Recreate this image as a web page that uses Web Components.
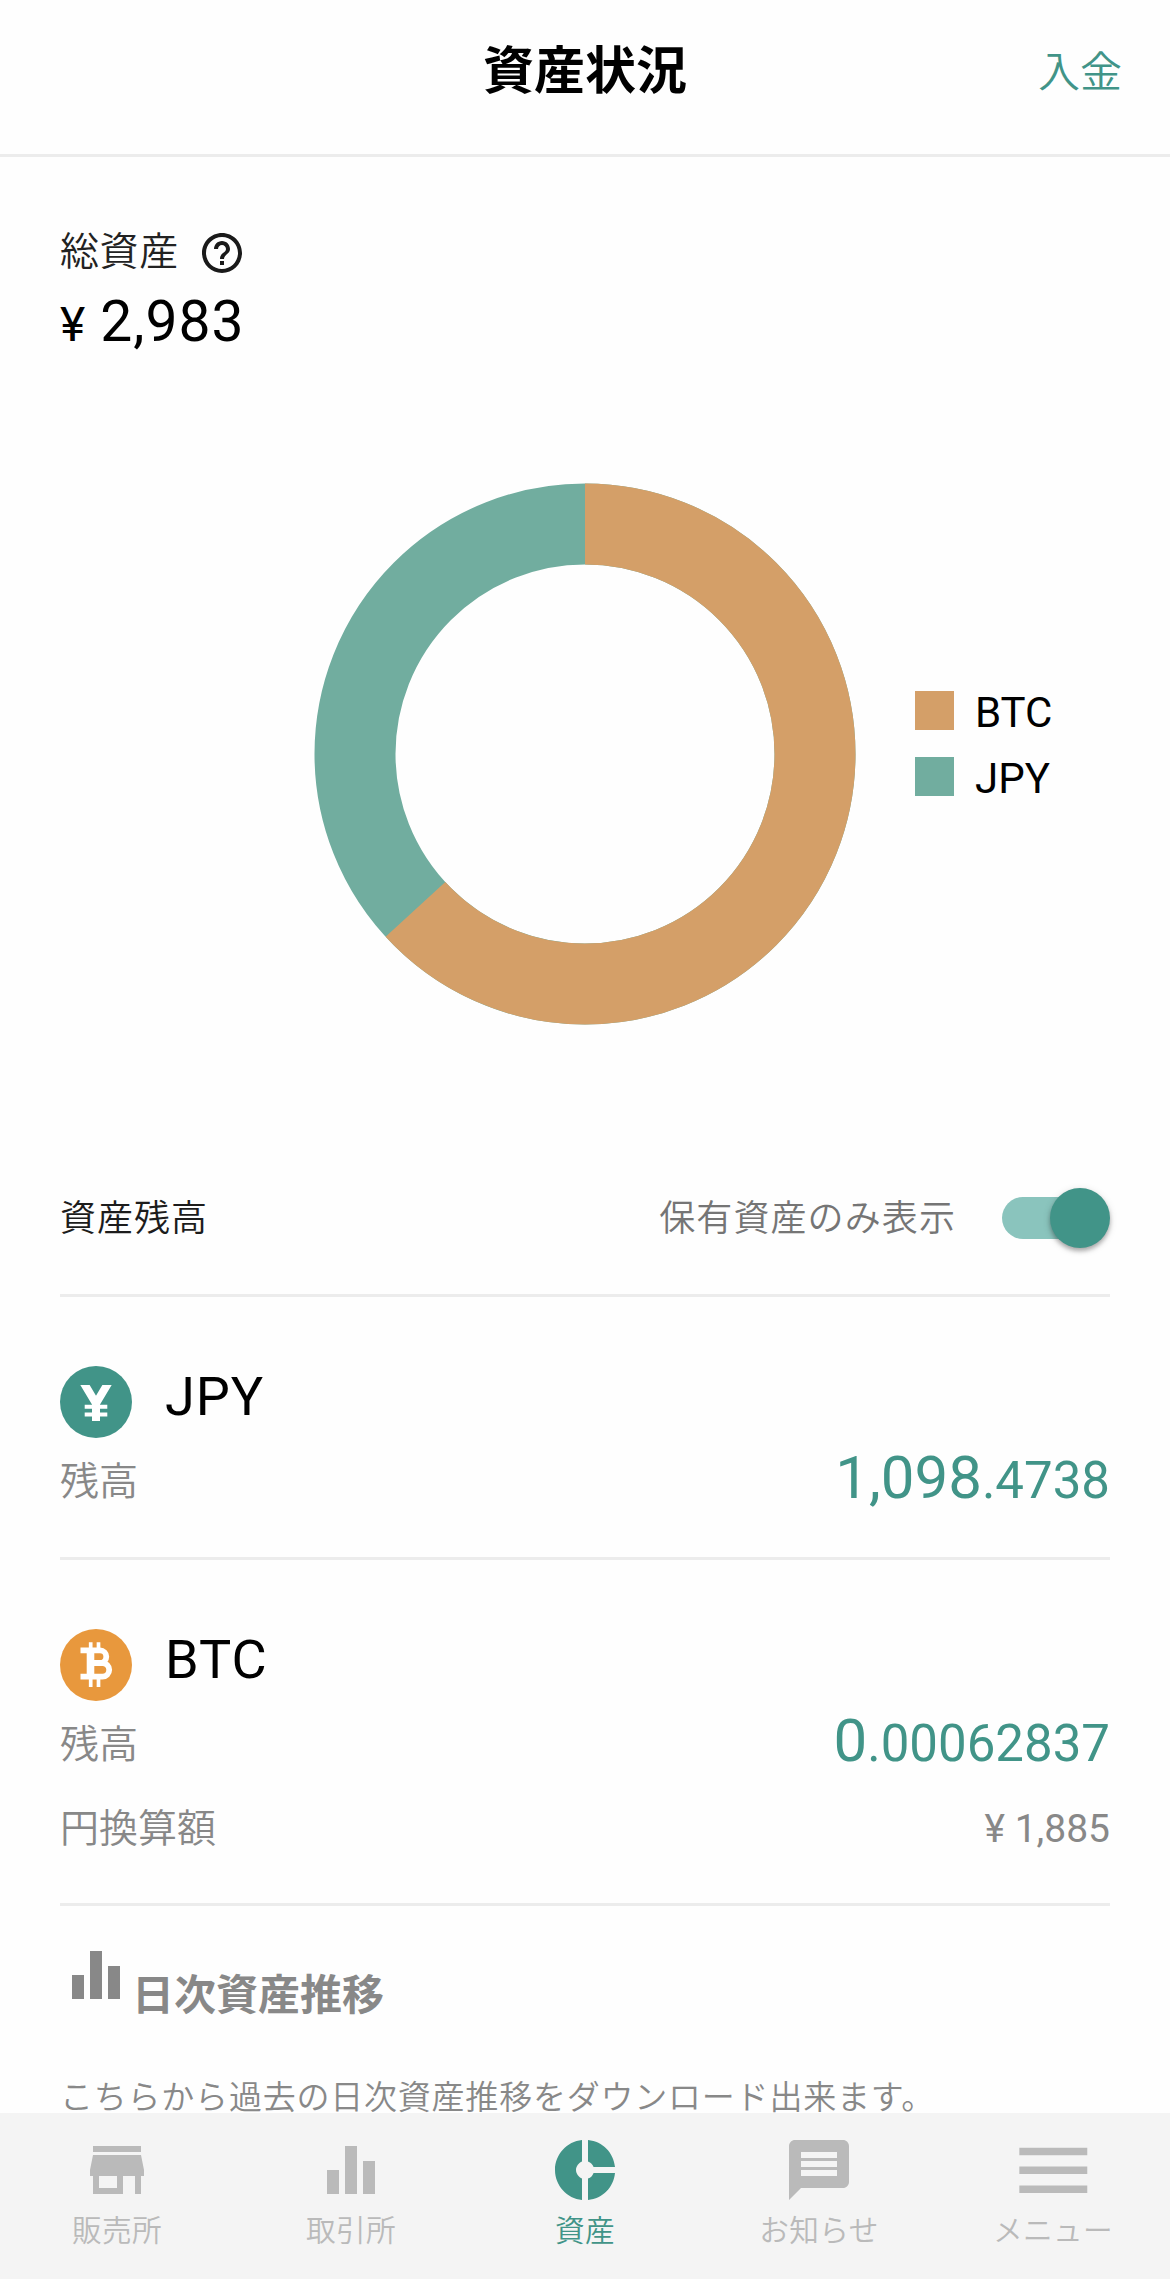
<!DOCTYPE html>
<html lang="ja">
<head>
<meta charset="utf-8">
<title>資産状況</title>
<style>
  :root {
    --green: #419488;
    --line: #ececec;
    --muted: #888888;
    --jp: "Noto Sans CJK JP", sans-serif;
    --num: Roboto, "Noto Sans CJK JP", sans-serif;
  }
  body {
    margin: 0;
    background: #fefefe;
    font-family: var(--jp);
    font-weight: 350;
    color: #000;
  }
</style>
</head>
<body>
<asset-page></asset-page>

<script>
// Small helper: attach an open shadow root and fill it from a template
function render(el, html) {
  const template = document.createElement('template');
  template.innerHTML = html;
  const shadow = el.attachShadow({ mode: 'open' });
  shadow.appendChild(template.content.cloneNode(true));
  return shadow;
}

const ICONS = {
  help: '<path d="M11 18h2v-2h-2v2zm1-16C6.48 2 2 6.48 2 12s4.48 10 10 10 10-4.48 10-10S17.52 2 12 2zm0 18c-4.41 0-8-3.59-8-8s3.59-8 8-8 8 3.59 8 8-3.59 8-8 8zm0-14c-2.21 0-4 1.79-4 4h2c0-1.1.9-2 2-2s2 .9 2 2c0 2-3 1.75-3 5h2c0-2.25 3-2.5 3-5 0-2.21-1.79-4-4-4z"/>',
  store: '<path d="M20 4H4v2h16V4zm1 10v-2l-1-5H4l-1 5v2h1v6h10v-6h4v6h2v-6h1zm-9 4H6v-4h6v4z"/>',
  bars: '<path d="M10 20h4V4h-4v16zm-6 0h4v-8H4v8zM16 9v11h4V9h-4z"/>',
  donut: '<path d="M11 9.16V2c-5 .5-9 4.79-9 10s4 9.5 9 10v-7.16c-1-.41-2-1.52-2-2.84s1-2.43 2-2.84zM14.86 11H22c-.48-4.75-4-8.53-9-9v7.16c1 .3 1.52.98 1.86 1.84zM13 14.84V22c5-.47 8.52-4.25 9-9h-7.14c-.34.86-.86 1.54-1.86 1.84z"/>',
  message: '<path d="M20 2H4c-1.1 0-1.99.9-1.99 2L2 22l4-4h14c1.1 0 2-.9 2-2V4c0-1.1-.9-2-2-2zm-2 12H6v-2h12v2zm0-3H6V9h12v2zm0-3H6V6h12v2z"/>',
  menu: '<path d="M3 18h18v-2H3v2zm0-5h18v-2H3v2zm0-7v2h18V6H3z"/>'
};

class MdIcon extends HTMLElement {
  constructor() {
    super();
    render(this, `
      <style>
        :host { display: block; flex: none; width: var(--size, 72px); height: var(--size, 72px); }
        svg { display: block; width: 100%; height: 100%; fill: currentColor; }
      </style>
      <svg viewBox="0 0 24 24">${ICONS[this.getAttribute('name')] || ''}</svg>
    `);
  }
}
customElements.define('md-icon', MdIcon);

// Round currency badge
const COINS = {
  jpy: `<circle cx="36" cy="36" r="36" fill="#419488"/>
    <clipPath id="top"><rect y="19" width="72" height="40"/></clipPath>
    <g fill="none" stroke="#fff" clip-path="url(#top)">
      <path d="M21.4 13L36 37.5L50.6 13" stroke-width="8"/>
      <path d="M36 36V55" stroke-width="8"/>
      <path d="M24.7 40.8H47.3M24.7 48.4H47.3" stroke-width="4"/>
    </g>`,
  btc: `<circle cx="36" cy="36" r="36" fill="#e8983d"/>
    <g fill="none" stroke="#fff">
      <path d="M20.5 21.4H40a6.3 6.3 0 0 1 0 12.6H31M40 34h2.4a6.8 6.8 0 0 1 0 13.6H20.5" stroke-width="5.8"/>
      <path d="M30.5 20V50" stroke-width="7.6"/>
      <path d="M30.7 13.3V20M38.5 13.3V20M30.7 49V58M38.5 49V58" stroke-width="3.7"/>
    </g>`
};

class CoinBadge extends HTMLElement {
  constructor() {
    super();
    render(this, `
      <style>
        :host { display: block; flex: none; width: 72px; height: 72px; }
        svg { display: block; }
      </style>
      <svg width="72" height="72" viewBox="0 0 72 72">${COINS[this.getAttribute('coin')]}</svg>
    `);
  }
}
customElements.define('coin-badge', CoinBadge);

class AppHeader extends HTMLElement {
  constructor() {
    super();
    render(this, `
      <style>
        :host {
          display: grid;
          grid-template-columns: 1fr auto 1fr;
          align-items: center;
          flex: none;
          box-sizing: border-box;
          height: 157px;
          padding: 0 48px 20px;
          border-bottom: 3px solid var(--line);
        }
        h1 { grid-column: 2; margin: 0; font-size: 51px; line-height: 60px; font-weight: 700; }
        .action { justify-self: end; margin-top: 4px; font-size: 42px; line-height: 60px; color: var(--green); }
      </style>
      <h1><slot></slot></h1>
      <span class="action"><slot name="action"></slot></span>
    `);
  }
}
customElements.define('app-header', AppHeader);

class AssetTotal extends HTMLElement {
  constructor() {
    super();
    render(this, `
      <style>
        :host { display: block; height: 255px; padding-top: 72px; }
        .label { display: flex; align-items: center; gap: 19px; height: 48px; font-size: 39px; line-height: 48px; color: #222; }
        .label span { margin-top: -10px; letter-spacing: 0.6px; }
        md-icon { --size: 48px; color: #1a1a1a; }
        .amount { display: flex; align-items: baseline; gap: 14px; margin-top: 15px; font: 400 57px/60px var(--num); letter-spacing: 1px; }
        .unit { font-size: 48px; }
      </style>
      <div class="label"><span>総資産</span><md-icon name="help"></md-icon></div>
      <div class="amount"><span class="unit">¥</span><span><slot></slot></span></div>
    `);
  }
}
customElements.define('asset-total', AssetTotal);

class AssetChart extends HTMLElement {
  constructor() {
    super();
    const btc = Number(this.getAttribute('btc'));
    render(this, `
      <style>
        :host { display: grid; grid-template-columns: 1fr 542px 1fr; height: 542px; margin-top: -1px; }
        svg { grid-column: 2; display: block; }
        .legend { display: flex; flex-direction: column; gap: 27px; padding: 208px 0 0 59px; font: 400 42px/39px var(--num); }
        .item { display: flex; gap: 21px; height: 39px; }
        .item span { padding-top: 2px; }
        i { width: 39px; height: 39px; background: #d49f68; }
        .jpy i { background: #71ad9f; }
      </style>
      <svg width="542" height="542" viewBox="-271 -271 542 542" fill="none" stroke-width="81">
        <circle r="230" stroke="#71ad9f"/>
        <circle r="230" stroke="#d49f68" transform="rotate(-90)" pathLength="100" stroke-dasharray="${btc} 100"/>
      </svg>
      <div class="legend">
        <div class="item"><i></i><span>BTC</span></div>
        <div class="item jpy"><i></i><span>JPY</span></div>
      </div>
    `);
  }
}
customElements.define('asset-chart', AssetChart);

class ToggleSwitch extends HTMLElement {
  constructor() {
    super();
    render(this, `
      <style>
        :host { display: flex; align-items: center; width: 102px; height: 42px; border-radius: 21px; background: #8ac4bd; margin-right: 6px; }
        .thumb {
          flex: none;
          width: 60px;
          height: 60px;
          margin-left: 48px;
          border-radius: 50%;
          background: var(--green);
          box-shadow: 0 3px 4px rgba(0, 0, 0, .28), 0 2px 8px rgba(0, 0, 0, .12);
        }
      </style>
      <div class="thumb"></div>
    `);
  }
}
customElements.define('toggle-switch', ToggleSwitch);

class BalanceBar extends HTMLElement {
  constructor() {
    super();
    render(this, `
      <style>
        :host {
          display: flex;
          align-items: center;
          height: 152px;
          margin-top: 117px;
          border-bottom: 3px solid var(--line);
          font-size: 36px;
          line-height: 48px;
          letter-spacing: 1px;
        }
        .title { flex: 1; color: #1c1c1c; margin-top: -6px; }
        .filter { color: #757575; margin: -6px 46px 0 0; letter-spacing: 1.1px; }
      </style>
      <span class="title">資産残高</span>
      <span class="filter">保有資産のみ表示</span>
      <toggle-switch></toggle-switch>
    `);
  }
}
customElements.define('balance-bar', BalanceBar);

// One currency: badge, name, balance and (optionally) its value in yen
class AssetRow extends HTMLElement {
  constructor() {
    super();
    const [whole, frac] = this.getAttribute('balance').split('.');
    const yen = this.getAttribute('yen');
    render(this, `
      <style>
        :host { display: block; padding: 69px 0 40px; border-bottom: 3px solid var(--line); }
        :host([yen]) { padding-bottom: 26px; }
        .head { display: flex; align-items: center; gap: 33px; height: 72px; }
        .name { margin-top: -10px; font: 400 54px/60px var(--num); letter-spacing: 1px; }
        .line { display: flex; justify-content: space-between; align-items: center; height: 79px; font-size: 39px; line-height: 48px; color: var(--muted); }
        .balance { margin-top: 4px; font: 400 60px/66px var(--num); color: var(--green); }
        .balance small { font-size: 51px; }
        .yen { height: 97px; }
        .yen .key { margin-top: -8px; }
        .yen .value { font: 400 39px/48px var(--num); }
      </style>
      <div class="head">
        <coin-badge coin="${this.getAttribute('coin')}"></coin-badge>
        <span class="name"><slot></slot></span>
      </div>
      <div class="line"><span>残高</span><span class="balance">${whole}<small>.${frac}</small></span></div>
      ${yen ? `<div class="line yen"><span class="key">円換算額</span><span class="value">¥ ${yen}</span></div>` : ''}
    `);
  }
}
customElements.define('asset-row', AssetRow);

class HistoryPanel extends HTMLElement {
  constructor() {
    super();
    render(this, `
      <style>
        :host { display: block; padding-top: 33px; color: var(--muted); }
        .head { display: flex; height: 72px; }
        h2 { margin: 23px 0 0; font-size: 42px; line-height: 60px; font-weight: 700; }
        p { margin: 68px 0 0; font-size: 33px; line-height: 32px; letter-spacing: 0.78px; white-space: nowrap; }
      </style>
      <div class="head"><md-icon name="bars"></md-icon><h2>日次資産推移</h2></div>
      <p>こちらから過去の日次資産推移をダウンロード出来ます。</p>
    `);
  }
}
customElements.define('history-panel', HistoryPanel);

class NavItem extends HTMLElement {
  constructor() {
    super();
    render(this, `
      <style>
        :host { display: flex; flex-direction: column; align-items: center; padding-top: 21px; color: #bababa; }
        :host([active]) { color: var(--green); }
        :host([icon="menu"]) { --size: 90.6px; }
        .icon { display: flex; align-items: center; justify-content: center; height: 72px; }
        .text { margin-top: 1px; font-size: 29.7px; line-height: 44px; letter-spacing: 0.3px; }
      </style>
      <div class="icon"><md-icon name="${this.getAttribute('icon')}"></md-icon></div>
      <div class="text"><slot></slot></div>
    `);
  }
}
customElements.define('nav-item', NavItem);

class BottomNav extends HTMLElement {
  constructor() {
    super();
    render(this, `
      <style>
        :host { display: grid; grid-template-columns: repeat(5, 1fr); flex: none; height: 166px; background: #f4f4f4; }
      </style>
      <slot></slot>
    `);
  }
}
customElements.define('bottom-nav', BottomNav);

class AssetPage extends HTMLElement {
  constructor() {
    super();
    render(this, `
      <style>
        :host { display: flex; flex-direction: column; height: 2279px; }
        main { flex: 1; min-height: 0; padding: 0 60px; }
      </style>
      <app-header>資産状況<span slot="action">入金</span></app-header>
      <main>
        <asset-total>2,983</asset-total>
        <asset-chart btc="63.19"></asset-chart>
        <balance-bar></balance-bar>
        <asset-row coin="jpy" balance="1,098.4738">JPY</asset-row>
        <asset-row coin="btc" balance="0.00062837" yen="1,885">BTC</asset-row>
        <history-panel></history-panel>
      </main>
      <bottom-nav>
        <nav-item icon="store">販売所</nav-item>
        <nav-item icon="bars">取引所</nav-item>
        <nav-item icon="donut" active>資産</nav-item>
        <nav-item icon="message">お知らせ</nav-item>
        <nav-item icon="menu">メニュー</nav-item>
      </bottom-nav>
    `);
  }
}
customElements.define('asset-page', AssetPage);
</script>
</body>
</html>
